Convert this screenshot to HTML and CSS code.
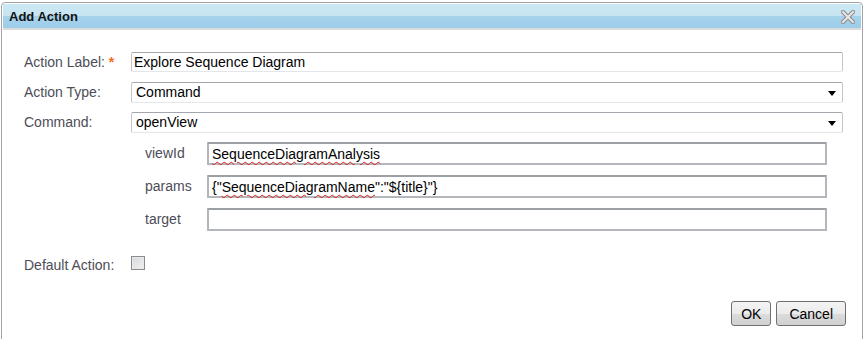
FILE: index.html
```html
<!DOCTYPE html>
<html lang="en">
<head>
    <meta charset="UTF-8">
    <title>Add Action</title>
    <link rel="stylesheet" href="styles.css">
</head>
<body>
    <div class="dialog">
        <div class="titlebar">
            <span class="title">Add Action</span>
            <svg class="close" width="14" height="14" viewBox="0 0 14 14">
                <path d="M2 2 L12 12 M12 2 L2 12" stroke="#8c8c8c" stroke-width="4.2" stroke-linecap="square"/>
                <path d="M2 2 L12 12 M12 2 L2 12" stroke="#e4e4e4" stroke-width="2.2" stroke-linecap="square"/>
            </svg>
        </div>

        <div class="form">
            <div class="row">
                <label class="lbl">Action Label: <span class="req">*</span></label>
                <div class="field">Explore Sequence Diagram</div>
            </div>
            <div class="row">
                <label class="lbl">Action Type:</label>
                <div class="field select">Command<span class="arrow"></span></div>
            </div>
            <div class="row">
                <label class="lbl">Command:</label>
                <div class="field select">openView<span class="arrow"></span></div>
            </div>

            <div class="params">
                <div class="subrow">
                    <label class="sublbl">viewId</label>
                    <div class="field sub"><span class="typo">SequenceDiagramAnalysis</span></div>
                </div>
                <div class="subrow">
                    <label class="sublbl">params</label>
                    <div class="field sub">{"<span class="typo">SequenceDiagramName</span>":"${title}"}</div>
                </div>
                <div class="subrow">
                    <label class="sublbl">target</label>
                    <div class="field sub"></div>
                </div>
            </div>

            <div class="row check-row">
                <label class="lbl">Default Action:</label>
                <span class="checkbox"></span>
            </div>
        </div>

        <div class="buttons">
            <button class="btn ok">OK</button>
            <button class="btn">Cancel</button>
        </div>
    </div>
</body>
</html>
```

FILE: styles.css
```css
body {
    margin: 0;
    background: #ffffff;
    font-family: "Liberation Sans", Arial, sans-serif;
}

.dialog {
    margin: 2px 2px 0 1px;
    height: 345px;
    border: 1px solid #a3a3a3;
    border-radius: 4px 4px 0 0;
    padding: 1px 1px 0 1px;
    box-sizing: border-box;
    background: #fff;
}

.titlebar {
    height: 24px;
    display: flex;
    align-items: center;
    justify-content: space-between;
    padding: 0 6px 0 6px;
    background: linear-gradient(to bottom, #cbe8f4 0%, #c6e4f2 50%, #a7d3ec 52%, #9ccdea 100%);
    border-bottom: 2px solid #dcdcdc;
}

.title {
    font-weight: bold;
    font-size: 13px;
    color: #111;
    padding-top: 1px;
}

.close {
    margin-top: 2px;
}

.form {
    padding: 22px 18px 0 21px;
}

.row {
    display: flex;
    align-items: center;
    height: 20px;
    margin-bottom: 10px;
}

.lbl {
    width: 107px;
    flex: none;
    font-size: 14px;
    color: #4d4d58;
}

.req {
    color: #f36b1b;
    font-weight: bold;
}

.field {
    position: relative;
    flex: 1;
    height: 20px;
    box-sizing: border-box;
    border: 1px solid #c2c6cc;
    border-top-color: #a4a8ae;
    border-bottom-color: #e3e6ea;
    border-radius: 2px;
    font-size: 14px;
    color: #000;
    line-height: 18px;
    padding-left: 2px;
    white-space: nowrap;
}

.select {
    height: 21px;
    line-height: 19px;
    padding-left: 4px;
}

.arrow {
    position: absolute;
    right: 6px;
    top: 8px;
    border-left: 4px solid transparent;
    border-right: 4px solid transparent;
    border-top: 5px solid #000;
}

.params {
    padding: 0 16px 0 121px;
}

.subrow {
    display: flex;
    align-items: center;
    height: 22px;
    margin-bottom: 11px;
}

.sublbl {
    width: 62px;
    flex: none;
    font-size: 14px;
    color: #4d4d58;
}

.field.sub {
    height: 23px;
    line-height: 21px;
    border: 2px solid #b3b7bc;
    border-top-color: #9ca0a5;
    border-radius: 1px;
    padding-left: 3px;
}

.typo {
    text-decoration: underline wavy #e02020;
    text-decoration-thickness: 1px;
    text-underline-offset: 2px;
}

.check-row {
    margin-top: 25px;
}

.checkbox {
    width: 12px;
    height: 12px;
    border: 1px solid #8b8b8b;
    background: linear-gradient(to bottom right, #d4d7db, #f2f3f5);
    box-shadow: inset 0 0 0 1px #e9e9e9;
    margin-top: -5px;
}

.buttons {
    display: flex;
    justify-content: flex-end;
    gap: 5px;
    padding: 16px 15px 0 0;
}

.btn {
    height: 25px;
    font-family: "Liberation Sans", Arial, sans-serif;
    font-size: 14px;
    color: #000;
    border: 1px solid #707070;
    border-radius: 3px;
    background: linear-gradient(to bottom, #f4f4f4 0%, #ebebeb 50%, #dcdcdc 52%, #d0d0d0 100%);
    padding: 0 12px;
}

.btn.ok {
    padding: 0 9px;
}
```
